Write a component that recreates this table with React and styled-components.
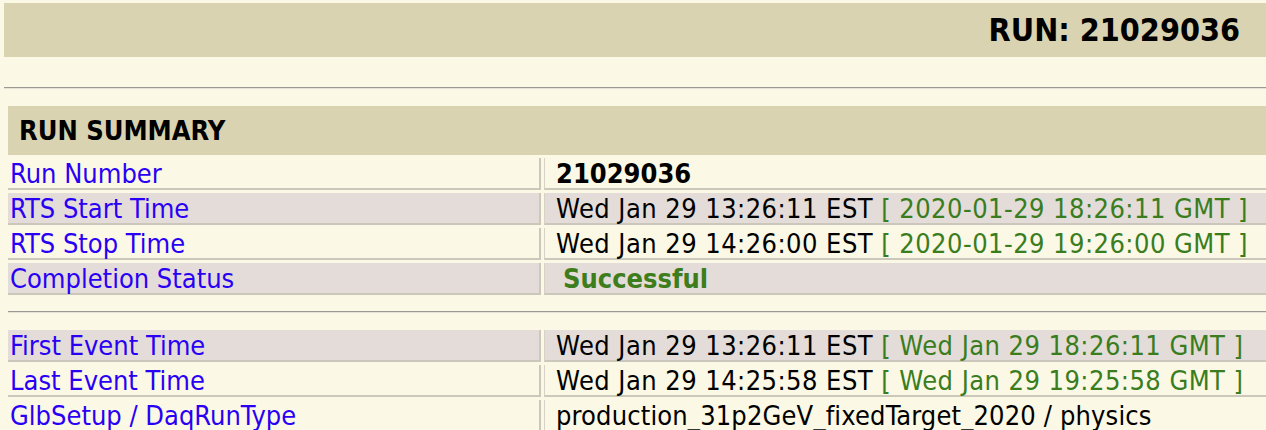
import React from "react";
import styled, { createGlobalStyle } from "styled-components";

const GlobalStyle = createGlobalStyle`
  html, body {
    margin: 0;
    padding: 0;
    background: #fbf8e5;
    overflow: hidden;
  }
  body {
    font-family: "DejaVu Sans Condensed", "DejaVu Sans", Verdana, sans-serif;
    font-stretch: condensed;
  }
`;

const Page = styled.div`
  padding: 3px 0 0 4px;
`;

const TitleBar = styled.div`
  height: 54px;
  background: #d9d3b2;
  display: flex;
  align-items: center;
  justify-content: flex-end;
  padding-right: 26px;
  font-size: 32px;
  font-weight: bold;
  color: #000;
`;

const Rule = styled.hr`
  margin: 30px 0 0 0;
  height: 0;
  border: 0;
  border-top: 1px solid #9a9a93;
  border-bottom: 1px solid #e4e2d5;
`;

const Section = styled.div`
  margin: 17px -30px 0 4px;
  display: flex;
  flex-direction: column;
  gap: 3px;
`;

const SectionHead = styled.div`
  height: 49px;
  background: #d9d3b2;
  display: flex;
  align-items: center;
  padding-left: 11px;
  font-size: 27px;
  font-weight: bold;
  color: #000;
`;

const Row = styled.div`
  display: grid;
  grid-template-columns: 533px 1fr;
  column-gap: 3px;
`;

const Cell = styled.div`
  box-sizing: border-box;
  height: 32px;
  display: flex;
  align-items: center;
  white-space: nowrap;
  font-size: 27px;
  background: ${p => (p.$shade ? "#e3dcd8" : "#fbf8e5")};
  border-right: 2px solid #cbc7bb;
  border-bottom: 2px solid #cbc7bb;
  border-left: ${p => (p.$value ? "1px solid #d6d2c6" : "0")};
  padding-left: ${p => (p.$value ? "11px" : "2px")};
`;

const Label = styled.span`
  color: #2a00f5;
`;

const Text = styled.span`
  letter-spacing: 0.15px;
`;

const Stamp = styled.span`
  letter-spacing: 0.45px;
  white-space: pre;
`;

const Gmt = styled.span`
  color: #3a7d1e;
`;

const Strong = styled.span`
  font-weight: bold;
  color: ${p => p.$color || "#000"};
  margin-left: ${p => p.$indent || 0}px;
`;

const Divider = styled(Rule)`
  margin: 13px 0 14px 0;
`;

const InfoRow = ({ label, shade, children }) => (
  <Row>
    <Cell $shade={shade}>
      <Label>{label}</Label>
    </Cell>
    <Cell $shade={shade} $value>
      {children}
    </Cell>
  </Row>
);

const TimeValue = ({ local, gmt }) => (
  <Stamp>
    {local} <Gmt>[ {gmt} GMT ]</Gmt>
  </Stamp>
);

export default function App() {
  return (
    <>
      <GlobalStyle />
      <Page>
        <TitleBar>RUN: 21029036</TitleBar>
        <Rule />
        <Section>
          <SectionHead>RUN SUMMARY</SectionHead>
          <InfoRow label="Run Number">
            <Strong>21029036</Strong>
          </InfoRow>
          <InfoRow label="RTS Start Time" shade>
            <TimeValue local="Wed Jan 29 13:26:11 EST" gmt="2020-01-29 18:26:11" />
          </InfoRow>
          <InfoRow label="RTS Stop Time">
            <TimeValue local="Wed Jan 29 14:26:00 EST" gmt="2020-01-29 19:26:00" />
          </InfoRow>
          <InfoRow label="Completion Status" shade>
            <Strong $color="#3e7d1c" $indent={7}>Successful</Strong>
          </InfoRow>
          <Divider />
          <InfoRow label="First Event Time" shade>
            <TimeValue local="Wed Jan 29 13:26:11 EST" gmt="Wed Jan 29 18:26:11" />
          </InfoRow>
          <InfoRow label="Last Event Time">
            <TimeValue local="Wed Jan 29 14:25:58 EST" gmt="Wed Jan 29 19:25:58" />
          </InfoRow>
          <InfoRow label="GlbSetup / DaqRunType">
            <Text>production_31p2GeV_fixedTarget_2020 / physics</Text>
          </InfoRow>
        </Section>
      </Page>
    </>
  );
}
